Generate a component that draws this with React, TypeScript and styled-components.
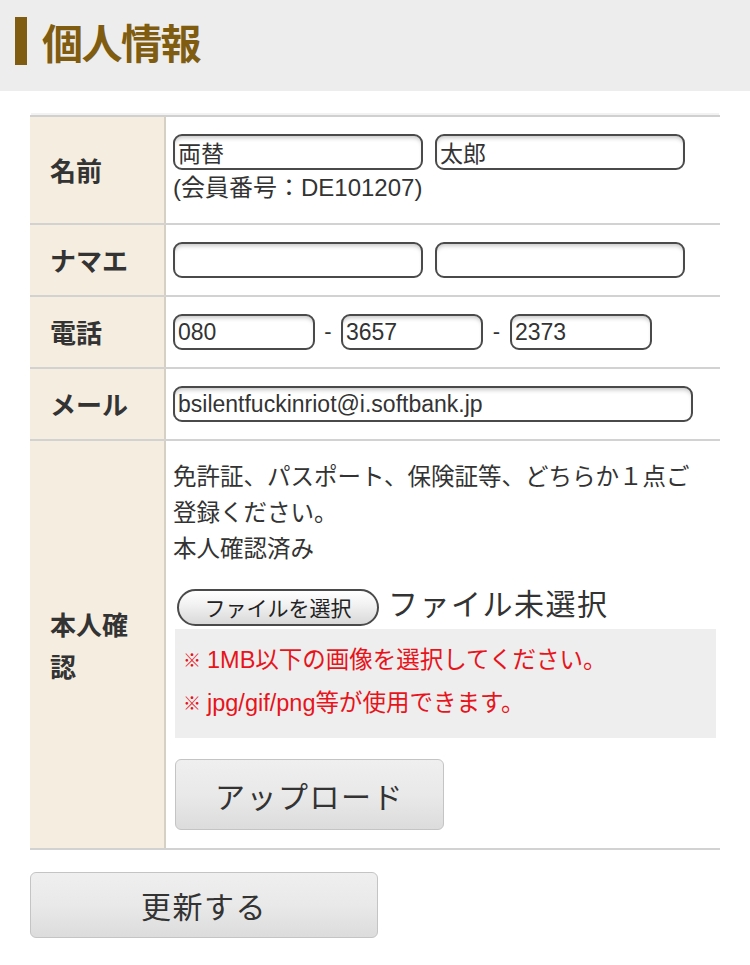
import React from "react";
import styled, { createGlobalStyle } from "styled-components";

const Global = createGlobalStyle`
  html, body { margin: 0; padding: 0; background: #fff; }
  body {
    font-family: "Liberation Sans", "Noto Sans CJK JP", sans-serif;
    color: #333;
  }
  * { box-sizing: border-box; }
`;

const Header = styled.header`
  height: 91px;
  background: #ededed;
  display: flex;
  align-items: center;
  padding-left: 15px;
  padding-bottom: 10px;
`;

const Bar = styled.span`
  width: 12px;
  height: 48px;
  background: #7f5c0f;
  margin-right: 15px;
`;

const Title = styled.h1`
  margin: 0;
  font-family: "Noto Sans CJK JP", sans-serif;
  font-size: 41px;
  font-weight: 700;
  color: #7f5c0f;
  letter-spacing: -1.5px;
`;

const Page = styled.main`
  padding: 24px 30px 30px;
`;

const Table = styled.div`
  border-top: 2px solid #d0d0d0;
  box-shadow: 0 -3px 0 -1px #f2f2f2;
`;

const Row = styled.div`
  display: grid;
  grid-template-columns: 136px 1fr;
  border-bottom: 2px solid #d2d2d2;
`;

const Label = styled.div`
  background: #f5ede0;
  border-right: 2px solid #d6d0c4;
  display: flex;
  align-items: center;
  padding: 0 24px 0 20px;
  font-family: "Noto Sans CJK JP", sans-serif;
  font-weight: 700;
  font-size: 26px;
  line-height: 42px;
  color: #333;
`;

const Cell = styled.div<{ $top?: number; $bottom?: number }>`
  padding: ${(p) => p.$top ?? 17}px 4px ${(p) => p.$bottom ?? 17}px 7px;
  font-size: 24px;
`;

const Line = styled.div`
  display: flex;
  align-items: center;
`;

const Input = styled.input<{ $w: number }>`
  width: ${(p) => p.$w}px;
  height: 36px;
  border: 2px solid #4a4a4a;
  border-radius: 9px;
  box-shadow: inset 0 4px 4px -2px rgba(0, 0, 0, 0.22);
  background: #fff;
  padding: 0 0 0 3px;
  font-family: "Liberation Sans", "Noto Sans CJK JP", sans-serif;
  font-size: 23px;
  color: #333;
  outline: none;
  margin: 0;
`;

const Gap = styled.span<{ $w: number }>`
  width: ${(p) => p.$w}px;
  text-align: center;
  font-size: 22px;
  color: #333;
`;

const Note = styled.div`
  line-height: 36px;
  font-family: "Liberation Sans", "Noto Sans CJK JP", sans-serif;
`;

const Text = styled.p`
  margin: 0;
  padding-right: 12px;
  font-family: "Noto Sans CJK JP", sans-serif;
  font-size: 23.5px;
  line-height: 36px;
  color: #333;
`;

const FileRow = styled.div`
  display: flex;
  align-items: center;
  height: 37px;
  margin-top: 24px;
  padding-left: 4px;
`;

const FileButton = styled.button`
  width: 202px;
  height: 37px;
  border: 2px solid #4a4a4a;
  border-radius: 19px;
  background: linear-gradient(#ffffff, #f2f2f2 40%, #d9d9d9);
  font-family: "Noto Sans CJK JP", sans-serif;
  font-size: 21px;
  line-height: 33px;
  color: #222;
  padding: 0;
  margin: 0 9px 0 0;
`;

const FileName = styled.span`
  font-family: "Noto Sans CJK JP", sans-serif;
  font-size: 30px;
  line-height: 37px;
  color: #333;
  letter-spacing: 1.5px;
  margin-top: -10px;
`;

const Notice = styled.div`
  margin-top: 3px;
  margin-left: 2px;
  background: #eeeeee;
  padding: 10px 6px 13px 8px;
`;

const Red = styled.p`
  margin: 0;
  height: 43px;
  display: flex;
  align-items: center;
  font-family: "Liberation Sans", "Noto Sans CJK JP", sans-serif;
  color: #e8141c;
  font-size: 23.5px;
  line-height: 1;
`;

const Mark = styled.span`
  font-size: 18px;
  margin-right: 6px;
`;

const BigButton = styled.button<{ $w: number; $h: number }>`
  width: ${(p) => p.$w}px;
  height: ${(p) => p.$h}px;
  border: 1px solid #c4c4c4;
  border-radius: 6px;
  background: linear-gradient(#efefef, #e9e9e9 50%, #dcdcdc);
  font-family: "Noto Sans CJK JP", sans-serif;
  font-size: 30px;
  color: #333;
  letter-spacing: 1.5px;
  padding: 0;
  margin: 0;
`;

const UploadWrap = styled.div`
  margin-top: 21px;
  padding-left: 2px;
  display: flex;
`;

const Footer = styled.div`
  margin-top: 22px;
  display: flex;
`;

export default function App() {
  return (
    <>
      <Global />
      <Header>
        <Bar />
        <Title>個人情報</Title>
      </Header>
      <Page>
        <Table>
          <Row>
            <Label>名前</Label>
            <Cell>
              <Line>
                <Input $w={250} defaultValue="両替" />
                <Gap $w={12} />
                <Input $w={250} defaultValue="太郎" />
              </Line>
              <Note>(会員番号：DE101207)</Note>
            </Cell>
          </Row>
          <Row>
            <Label>ナマエ</Label>
            <Cell>
              <Line>
                <Input $w={250} defaultValue="" />
                <Gap $w={12} />
                <Input $w={250} defaultValue="" />
              </Line>
            </Cell>
          </Row>
          <Row>
            <Label>電話</Label>
            <Cell>
              <Line>
                <Input $w={142} defaultValue="080" />
                <Gap $w={26}>-</Gap>
                <Input $w={142} defaultValue="3657" />
                <Gap $w={27}>-</Gap>
                <Input $w={142} defaultValue="2373" />
              </Line>
            </Cell>
          </Row>
          <Row>
            <Label>メール</Label>
            <Cell>
              <Line>
                <Input $w={520} defaultValue="bsilentfuckinriot@i.softbank.jp" />
              </Line>
            </Cell>
          </Row>
          <Row>
            <Label>本人確認</Label>
            <Cell $top={16} $bottom={18}>
              <Text>免許証、パスポート、保険証等、どちらか１点ご登録ください。</Text>
              <Text>本人確認済み</Text>
              <FileRow>
                <FileButton type="button">ファイルを選択</FileButton>
                <FileName>ファイル未選択</FileName>
              </FileRow>
              <Notice>
                <Red>
                  <Mark>※</Mark>1MB以下の画像を選択してください。
                </Red>
                <Red>
                  <Mark>※</Mark>jpg/gif/png等が使用できます。
                </Red>
              </Notice>
              <UploadWrap>
                <BigButton type="button" $w={269} $h={71}>
                  アップロード
                </BigButton>
              </UploadWrap>
            </Cell>
          </Row>
        </Table>
        <Footer>
          <BigButton type="button" $w={348} $h={66}>
            更新する
          </BigButton>
        </Footer>
      </Page>
    </>
  );
}
